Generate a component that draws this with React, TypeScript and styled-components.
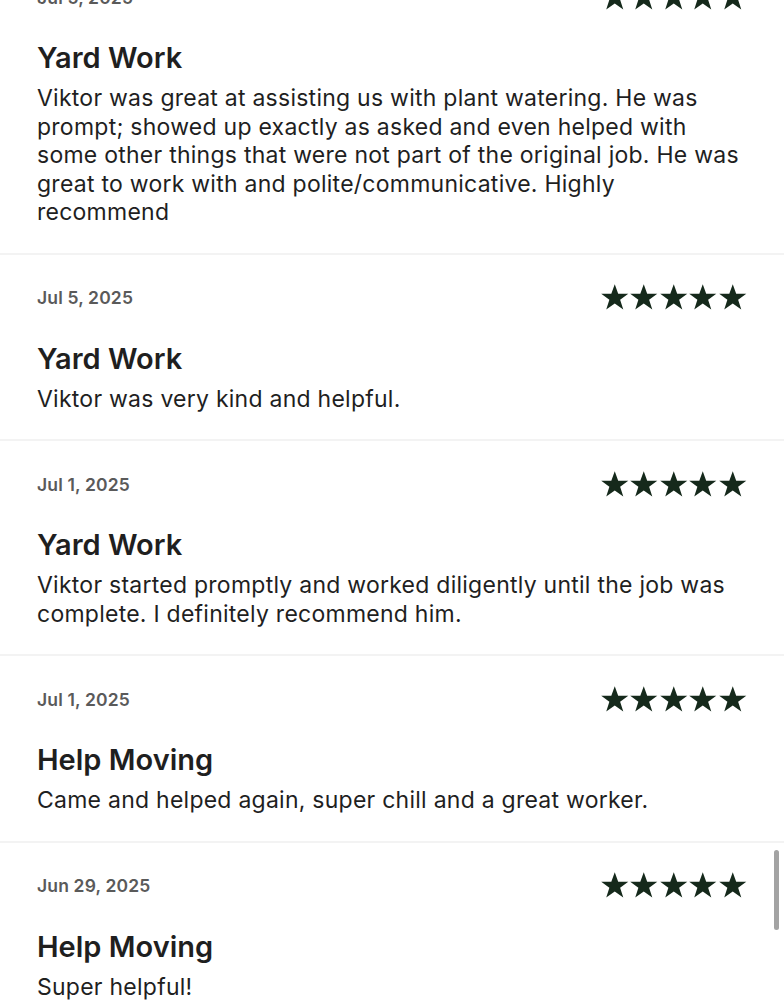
import styled, { createGlobalStyle } from 'styled-components'

/*
 * Types.
 */

interface Review {
  date: string
  title: string
  body: string
}

/*
 * Data.
 */

const reviews: Review[] = [
  {
    date: 'Jul 5, 2025',
    title: 'Yard Work',
    body: 'Viktor was great at assisting us with plant watering. He was prompt; showed up exactly as asked and even helped with some other things that were not part of the original job. He was great to work with and polite/communicative. Highly recommend',
  },
  {
    date: 'Jul 5, 2025',
    title: 'Yard Work',
    body: 'Viktor was very kind and helpful.',
  },
  {
    date: 'Jul 1, 2025',
    title: 'Yard Work',
    body: 'Viktor started promptly and worked diligently until the job was complete. I definitely recommend him.',
  },
  {
    date: 'Jul 1, 2025',
    title: 'Help Moving',
    body: 'Came and helped again, super chill and a great worker.',
  },
  {
    date: 'Jun 29, 2025',
    title: 'Help Moving',
    body: 'Super helpful!',
  },
]

/*
 * Styles.
 */

const GlobalStyle = createGlobalStyle`
  html, body {
    margin: 0;
    padding: 0;
    background: #ffffff;
    overflow: hidden;
  }
  body {
    font-family: Inter, "Noto Sans", sans-serif;
    color: #1f1f1f;
  }
`

const Page = styled.div`
  width: 784px;
  height: 1000px;
  overflow: hidden;
`

const List = styled.div`
  margin-top: -46px;
  display: flex;
  flex-direction: column;
`

const Card = styled.article`
  padding: 28px 37px 26px 37px;
  border-bottom: 2px solid #f3f3f3;
`

const TopRow = styled.div`
  display: flex;
  align-items: center;
  justify-content: space-between;
  height: 30px;
`

const DateLabel = styled.span`
  font-size: 17.5px;
  font-weight: 600;
  letter-spacing: 0.15px;
  color: #5a5a5a;
`

const Stars = styled.div`
  display: flex;
  margin-right: 0;
`

const Title = styled.h3`
  margin: 29px 0 0;
  font-size: 29px;
  line-height: 34px;
  font-weight: 600;
  color: #1f1f1f;
`

const Body = styled.p`
  margin: 9px 0 0;
  font-size: 23px;
  line-height: 28.5px;
  font-weight: 400;
  letter-spacing: 0.25px;
  color: #1f1f1f;
`

const ScrollThumb = styled.div`
  position: fixed;
  right: 5px;
  top: 850px;
  width: 5px;
  height: 80px;
  border-radius: 3px;
  background: #a3a3a3;
`

/*
 * Components.
 */

const Star = () => (
  <svg width="29.5" height="29" viewBox="0 0 24 24">
    <path
      fill="#15291b"
      d="M12 1l2.85 7.9h8.35l-6.75 4.95 2.6 8.05L12 16.95l-7.05 4.95 2.6-8.05L0.8 8.9h8.35z"
    />
  </svg>
)

const ReviewCard = ({ review }: { review: Review }) => (
  <Card>
    <TopRow>
      <DateLabel>{review.date}</DateLabel>
      <Stars>
        {[0, 1, 2, 3, 4].map((i) => (
          <Star key={i} />
        ))}
      </Stars>
    </TopRow>
    <Title>{review.title}</Title>
    <Body>{review.body}</Body>
  </Card>
)

export default function App() {
  return (
    <>
      <GlobalStyle />
      <Page>
        <List>
          {reviews.map((review, i) => (
            <ReviewCard key={i} review={review} />
          ))}
        </List>
      </Page>
      <ScrollThumb />
    </>
  )
}
